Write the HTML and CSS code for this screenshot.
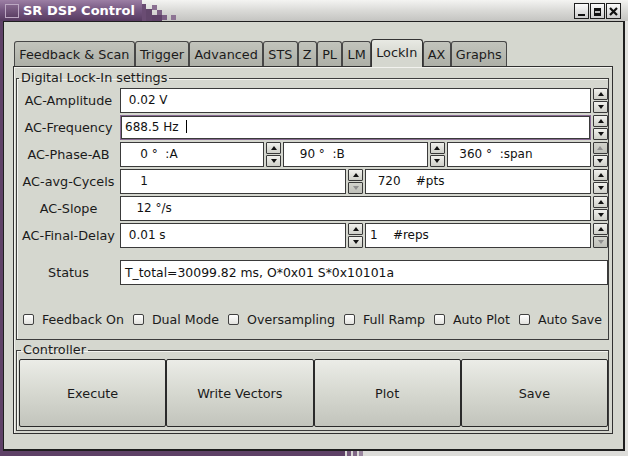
FILE: index.html
```html
<!DOCTYPE html>
<html lang="en">
<head>
<meta charset="utf-8">
<title>SR DSP Control</title>
<link rel="stylesheet" href="styles.css">
</head>
<body>
<div class="win">
  <header class="titlebar">
    <div class="title-left">
      <span class="app-icon"></span>
      <span class="title">SR DSP Control</span>
    </div>
    <svg class="fade" width="40" height="21" viewBox="0 0 40 21">
      <rect x="0" y="4" width="4" height="17" fill="#6a4c73"/>
      <rect x="4" y="9" width="6" height="12" fill="#62466b"/>
      <rect x="10" y="5" width="5" height="5" fill="#8a6f91"/>
      <rect x="15" y="10" width="5" height="5" fill="#7b5f83"/>
      <rect x="10" y="15" width="10" height="6" fill="#5e4267"/>
      <rect x="20" y="15" width="5" height="5" fill="#7a5e82"/>
      <rect x="29" y="15" width="5" height="5" fill="#8d7493"/>
    </svg>
    <div class="wm-buttons">
      <span class="wm-btn"><svg width="11" height="11" viewBox="0 0 11 11"><rect x="2" y="8" width="7" height="2" fill="#111"/></svg></span>
      <span class="wm-btn"><svg width="11" height="11" viewBox="0 0 11 11"><rect x="2" y="2" width="7" height="8" fill="#111"/><rect x="3" y="5" width="5" height="2" fill="#bdbdbd"/></svg></span>
      <span class="wm-btn"><svg width="11" height="11" viewBox="0 0 11 11"><path d="M2 2 L9 9 M9 2 L2 9" stroke="#111" stroke-width="2.2"/></svg></span>
    </div>
  </header>

  <div class="frame">
    <div class="client">
      <div class="notebook">
        <div class="tabs">
          <span class="tab">Feedback &amp; Scan</span>
          <span class="tab">Trigger</span>
          <span class="tab">Advanced</span>
          <span class="tab">STS</span>
          <span class="tab">Z</span>
          <span class="tab">PL</span>
          <span class="tab">LM</span>
          <span class="tab active">LockIn</span>
          <span class="tab">AX</span>
          <span class="tab">Graphs</span>
        </div>
        <div class="panel">
          <fieldset class="group lockin">
            <legend>Digital Lock-In settings</legend>
            <div class="form">
              <span class="lbl">AC-Amplitude</span>
              <div class="spin">
                <span class="entry"> 0.02 V</span>
                <span class="sbs"><span class="sb up"></span><span class="sb down"></span></span>
              </div>

              <span class="lbl">AC-Frequency</span>
              <div class="spin">
                <span class="entry focus">688.5 Hz  <span class="cursor"></span></span>
                <span class="sbs"><span class="sb up"></span><span class="sb down"></span></span>
              </div>

              <span class="lbl">AC-Phase-AB</span>
              <div class="split3">
                <div class="spin">
                  <span class="entry">    0 °  :A</span>
                  <span class="sbs"><span class="sb up"></span><span class="sb down"></span></span>
                </div>
                <div class="spin">
                  <span class="entry">   90 °  :B</span>
                  <span class="sbs"><span class="sb up"></span><span class="sb down"></span></span>
                </div>
                <div class="spin">
                  <span class="entry">  360 °  :span</span>
                  <span class="sbs"><span class="sb up off"></span><span class="sb down"></span></span>
                </div>
              </div>

              <span class="lbl">AC-avg-Cycels</span>
              <div class="split2">
                <div class="spin">
                  <span class="entry">    1</span>
                  <span class="sbs"><span class="sb up"></span><span class="sb down off"></span></span>
                </div>
                <div class="spin">
                  <span class="entry">  720    #pts</span>
                  <span class="sbs"><span class="sb up"></span><span class="sb down"></span></span>
                </div>
              </div>

              <span class="lbl">AC-Slope</span>
              <div class="spin">
                <span class="entry">   12 °/s</span>
                <span class="sbs"><span class="sb up"></span><span class="sb down"></span></span>
              </div>

              <span class="lbl">AC-Final-Delay</span>
              <div class="split2">
                <div class="spin">
                  <span class="entry"> 0.01 s</span>
                  <span class="sbs"><span class="sb up"></span><span class="sb down"></span></span>
                </div>
                <div class="spin">
                  <span class="entry">1    #reps</span>
                  <span class="sbs"><span class="sb up"></span><span class="sb down off"></span></span>
                </div>
              </div>
            </div>

            <div class="form status">
              <span class="lbl">Status</span>
              <span class="entry status-text">T_total=30099.82 ms, O*0x01 S*0x10101a</span>
            </div>

            <div class="checks">
              <label class="check"><span class="box"></span>Feedback On</label>
              <label class="check"><span class="box"></span>Dual Mode</label>
              <label class="check"><span class="box"></span>Oversampling</label>
              <label class="check"><span class="box"></span>Full Ramp</label>
              <label class="check"><span class="box"></span>Auto Plot</label>
              <label class="check"><span class="box"></span>Auto Save</label>
            </div>
          </fieldset>

          <fieldset class="group controller">
            <legend>Controller</legend>
            <div class="buttons">
              <button class="btn">Execute</button>
              <button class="btn">Write Vectors</button>
              <button class="btn">Plot</button>
              <button class="btn">Save</button>
            </div>
          </fieldset>
        </div>
      </div>
    </div>
  </div>
  <div class="bottom-strip"></div>
</div>
</body>
</html>
```

FILE: styles.css
```css
* { box-sizing: border-box; }
html, body { margin: 0; padding: 0; }
body {
  width: 628px;
  height: 456px;
  overflow: hidden;
  font-family: "DejaVu Sans", "Liberation Sans", sans-serif;
  font-size: 12.8px;
  color: #1b1b1b;
  background: #d5d7cf;
}
.win {
  width: 628px;
  height: 456px;
  display: flex;
  flex-direction: column;
}

/* title bar */
.titlebar {
  height: 21px;
  flex: none;
  display: flex;
  background: linear-gradient(#f4f4f2, #dadad7 50%, #c4c4c1);
}
.title-left {
  width: 142px;
  display: flex;
  align-items: center;
  gap: 4px;
  padding-left: 5px;
  background: linear-gradient(#9c7fa4, #745680 50%, #563a5f);
}
.app-icon {
  width: 14px;
  height: 14px;
  border: 1px solid #bca8c2;
  background: linear-gradient(#84668c, #5c4065);
}
.title {
  color: #fff;
  font-weight: bold;
  font-size: 13px;
  white-space: nowrap;
}
.fade { display: block; flex: none; }
.wm-buttons {
  margin-left: auto;
  display: flex;
  gap: 1px;
  padding: 3px 7px 0 0;
}
.wm-btn {
  width: 15px;
  height: 16px;
  border: 1px solid #1e1e1e;
  background: linear-gradient(#fbfbfb, #cdcdcd);
  display: flex;
  align-items: center;
  justify-content: center;
}

/* window frame */
.frame {
  flex: 1;
  display: flex;
  min-width: 0;
  border-left: 3px solid #5e4167;
  border-right: 3px solid #e2e2df;
}
.client {
  flex: 1;
  min-width: 0;
  display: flex;
  border: 1px solid #1f1f1f;
  border-right-width: 2px;
  border-bottom-width: 2px;
  padding: 17px 10px 15px 9px;
  background: #d5d7cf;
}
.bottom-strip {
  height: 5px;
  flex: none;
  background: linear-gradient(to right,
    #5e4167 0 345px, #d9d9d6 345px 347px,
    #765a7e 347px 351px, #d9d9d6 351px 353px,
    #806786 353px 357px, #d9d9d6 357px 359px,
    #9a879f 359px 363px, #dcdcd9 363px);
}

/* notebook */
.notebook {
  flex: 1;
  min-width: 0;
  display: flex;
  flex-direction: column;
}
.tabs {
  height: 27px;
  display: flex;
  align-items: flex-end;
  padding-left: 1px;
}
.tab {
  height: 25px;
  padding: 0 4.25px;
  display: flex;
  align-items: center;
  border: 1px solid #474747;
  border-bottom: none;
  border-radius: 3px 3px 0 0;
  background: linear-gradient(#c2c4bc, #adafa7);
  white-space: nowrap;
}
.tab.active {
  height: 28px;
  margin-bottom: -1px;
  position: relative;
  z-index: 1;
  padding-bottom: 2px;
  border-color: #333;
  background: linear-gradient(#e8e9e3, #d5d7cf 60%);
}
.panel {
  flex: 1;
  min-width: 0;
  display: flex;
  flex-direction: column;
  border: 1px solid #303030;
  box-shadow: inset 1px 1px 0 #f2f2ee;
  padding: 4px 3px 2px 2px;
}

/* frames */
.group {
  margin: 0;
  min-width: 0;
  border: 1px solid #3c3c3c;
  box-shadow: inset 1px 1px 0 #f3f3ef;
}
.group legend {
  margin-left: 2px;
  padding: 0 2px;
  line-height: 14px;
}
.lockin {
  padding: 3px 0 12px 0;
}
.controller {
  margin-top: 3px;
  padding: 2px 0 3px 2px;
}

.form {
  display: grid;
  grid-template-columns: 103px minmax(0, 1fr);
  grid-auto-rows: 25px;
  row-gap: 2px;
}
.form.status { margin-top: 12px; }
.lbl {
  display: flex;
  align-items: center;
  justify-content: center;
  white-space: nowrap;
}

.spin {
  display: flex;
  gap: 2px;
  min-width: 0;
}
.split3 {
  display: grid;
  grid-template-columns: repeat(3, minmax(0, 1fr));
  gap: 2px;
}
.split2 {
  display: grid;
  grid-template-columns: repeat(2, minmax(0, 1fr));
  gap: 2px;
}
.entry {
  flex: 1;
  min-width: 0;
  height: 25px;
  background: #fff;
  border: 1px solid #3a3a3a;
  padding: 0 4px;
  font-size: 12px;
  line-height: 23px;
  white-space: pre;
  overflow: hidden;
  color: #111;
}
.entry.status-text { font-size: 12.4px; }
.entry.focus {
  border-color: #876892;
  box-shadow: inset 0 0 0 1px #3a3a3a;
}
.cursor {
  display: inline-block;
  width: 1px;
  height: 13px;
  background: #000;
  vertical-align: -2px;
}
.sbs {
  width: 15px;
  flex: none;
  display: flex;
  flex-direction: column;
  gap: 1px;
}
.sb {
  flex: 1;
  border: 1px solid #383838;
  border-radius: 1px;
  background: linear-gradient(#f1f1ed, #cfd0c9);
  display: flex;
  align-items: center;
  justify-content: center;
}
.sb::after {
  content: "";
  border-left: 3px solid transparent;
  border-right: 3px solid transparent;
}
.sb.up::after { border-bottom: 4px solid #111; }
.sb.down::after { border-top: 4px solid #111; }
.sb.off { background: linear-gradient(#d2d3cc, #bfc0b9); }
.sb.up.off::after { border-bottom-color: #8f8f8f; }
.sb.down.off::after { border-top-color: #8f8f8f; }

/* checks */
.checks {
  margin-top: 26px;
  height: 16px;
  display: flex;
  align-items: center;
  padding-left: 6px;
  white-space: nowrap;
  overflow: hidden;
  font-size: 12.6px;
}
.check {
  display: flex;
  align-items: center;
  gap: 8px;
  margin-right: 9px;
}
.box {
  width: 11px;
  height: 11px;
  border: 1px solid #404040;
  border-radius: 2px;
  background: linear-gradient(#ffffff, #e2e2de);
}

/* controller buttons */
.buttons {
  display: grid;
  grid-template-columns: repeat(4, minmax(0, 1fr));
  height: 68px;
}
.btn {
  font: inherit;
  color: #1b1b1b;
  border: 1px solid #2a2a2a;
  border-radius: 2px;
  background: linear-gradient(#ebece7, #d6d8d0 50%, #c2c4bc);
  padding: 0;
  margin: 0;
}
```
